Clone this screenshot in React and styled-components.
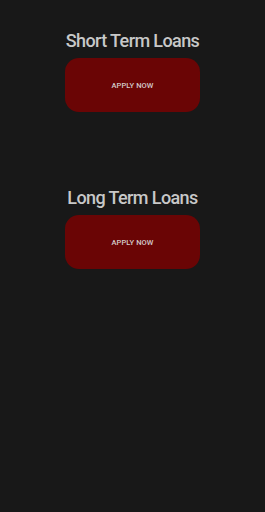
import React from "react";
import styled, { createGlobalStyle } from "styled-components";

const GlobalStyle = createGlobalStyle`
  html, body {
    margin: 0;
    padding: 0;
    background: #181818;
  }
  body {
    font-family: Roboto, "Liberation Sans", sans-serif;
  }
`;

export default function App() {
  return (
    <>
      <GlobalStyle />
      <Page>
        <LoanBlock>
          <Title>Short Term Loans</Title>
          <ApplyButton>APPLY NOW</ApplyButton>
        </LoanBlock>
        <LoanBlock>
          <Title>Long Term Loans</Title>
          <ApplyButton>APPLY NOW</ApplyButton>
        </LoanBlock>
      </Page>
    </>
  );
}

const Page = styled.div`
  min-height: 512px;
  background: #181818;
  display: flex;
  flex-direction: column;
  align-items: center;
  padding-top: 31px;
  gap: 76px;
  box-sizing: border-box;
`;

const LoanBlock = styled.div`
  display: flex;
  flex-direction: column;
  align-items: center;
  gap: 7px;
`;

const Title = styled.h2`
  margin: 0;
  font-size: 18px;
  font-weight: 500;
  line-height: 20px;
  letter-spacing: -0.6px;
  color: #c8c8c8;
`;

const ApplyButton = styled.button`
  width: 135px;
  height: 54px;
  border: none;
  border-radius: 14px;
  background: #6a0505;
  color: #d4cccc;
  font-family: Roboto, "Liberation Sans", sans-serif;
  font-size: 7.5px;
  font-weight: 500;
  letter-spacing: 0.1px;
  cursor: pointer;
`;
